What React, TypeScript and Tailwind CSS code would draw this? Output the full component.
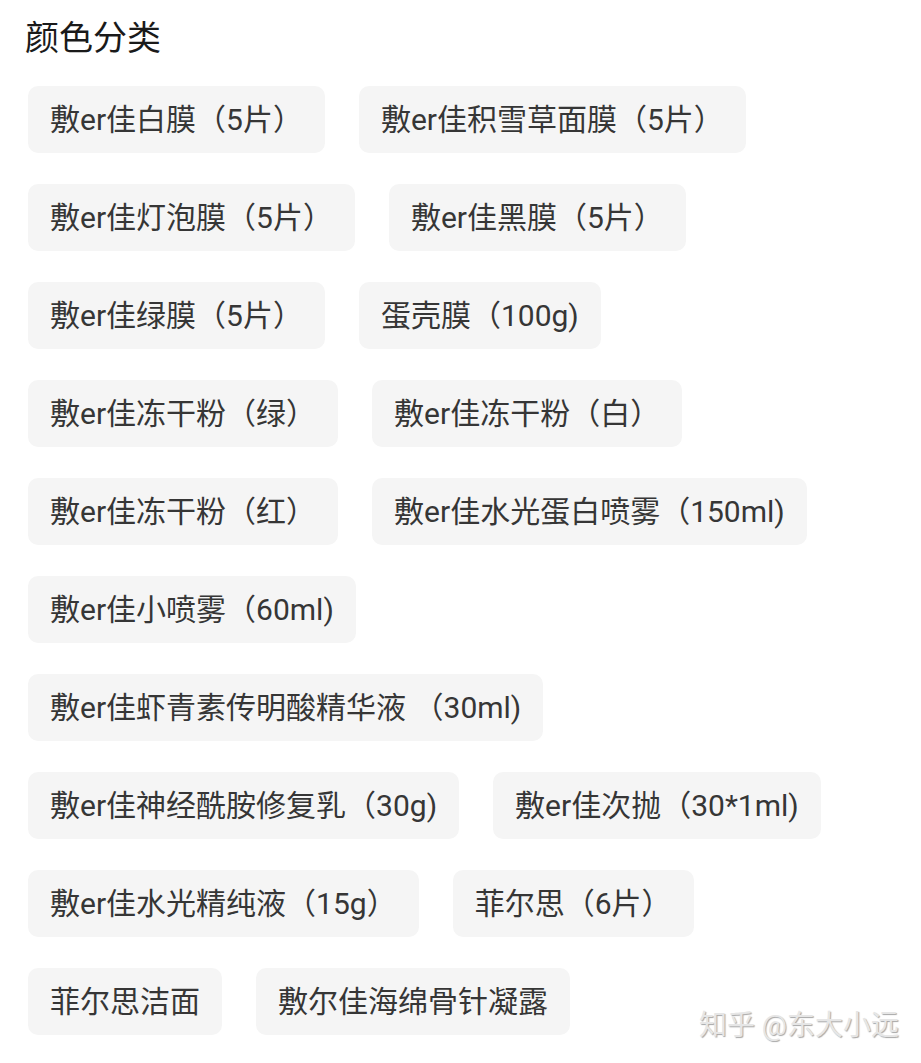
import React from 'react';

const rows: string[][] = [
  ['敷er佳白膜（5片）', '敷er佳积雪草面膜（5片）'],
  ['敷er佳灯泡膜（5片）', '敷er佳黑膜（5片）'],
  ['敷er佳绿膜（5片）', '蛋壳膜（100g)'],
  ['敷er佳冻干粉（绿）', '敷er佳冻干粉（白）'],
  ['敷er佳冻干粉（红）', '敷er佳水光蛋白喷雾（150ml)'],
  ['敷er佳小喷雾（60ml)'],
  ['敷er佳虾青素传明酸精华液 （30ml)'],
  ['敷er佳神经酰胺修复乳（30g)', '敷er佳次抛（30*1ml)'],
  ['敷er佳水光精纯液（15g）', '菲尔思（6片）'],
  ['菲尔思洁面', '敷尔佳海绵骨针凝露'],
];

export default function App() {
  return (
    <div
      className="relative min-h-[1063px] w-[921px] bg-white pl-[28px] pr-[28px] pt-[16px]"
      style={{ fontFamily: 'Roboto, "Noto Sans CJK SC", sans-serif' }}
    >
      <h2 className="ml-[-3px] text-[34px] leading-[44px] text-[#1a1a1a]">颜色分类</h2>

      {/* Options */}
      <div className="mt-[26px] flex flex-col gap-[31px]">
        {rows.map((row, i) => (
          <div key={i} className="flex gap-[34px]">
            {row.map((label) => (
              <div
                key={label}
                className="whitespace-pre rounded-[10px] bg-[#f5f5f5] px-[22px] py-[15px] text-[30px] leading-[37px] text-[#363636]"
              >
                {label}
              </div>
            ))}
          </div>
        ))}
      </div>

      <div
        className="absolute right-[22px] top-[1008px] text-[28px] leading-[36px] text-[#e6e6e6]"
        style={{ textShadow: '1px 1px 1px rgba(0,0,0,0.35)' }}
      >
        知乎 @东大小远
      </div>
    </div>
  );
}
